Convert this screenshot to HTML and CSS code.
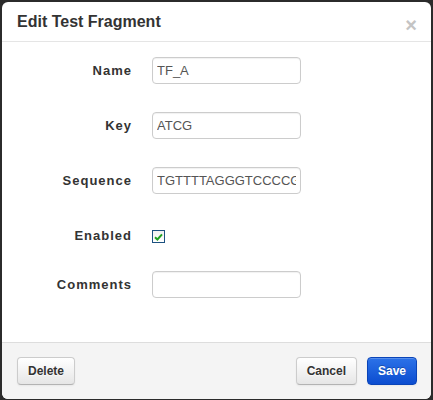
FILE: index.html
```html
<!DOCTYPE html>
<html>
<head>
<meta charset="utf-8">
<title>Edit Test Fragment</title>
<link rel="stylesheet" href="styles.css">
</head>
<body>
<div class="modal">
  <div class="modal-header">
    <h3 class="title">Edit Test Fragment</h3>
    <span class="close">×</span>
  </div>
  <div class="modal-body">
    <div class="row">
      <label class="label">Name</label>
      <input class="field" type="text" value="TF_A">
    </div>
    <div class="row">
      <label class="label">Key</label>
      <input class="field" type="text" value="ATCG">
    </div>
    <div class="row">
      <label class="label">Sequence</label>
      <input class="field" type="text" value="TGTTTTAGGGTCCCCGCCTAG">
    </div>
    <div class="row row-check">
      <label class="label">Enabled</label>
      <span class="checkbox"><svg width="9" height="8" viewBox="0 0 9 8"><path d="M1 4.2 L3.4 6.5 L8 1.3" fill="none" stroke="#1fa01f" stroke-width="2"/></svg></span>
    </div>
    <div class="row">
      <label class="label">Comments</label>
      <input class="field" type="text" value="">
    </div>
  </div>
  <div class="modal-footer">
    <button class="btn">Delete</button>
    <div class="spacer"></div>
    <button class="btn">Cancel</button>
    <button class="btn btn-primary">Save</button>
  </div>
</div>
</body>
</html>
```
FILE: styles.css
```css
html, body {
  margin: 0;
  padding: 0;
  background: #2b2b2b;
  height: 400px;
  overflow: hidden;
}
body {
  padding: 2px 2px 1px 2px;
  box-sizing: border-box;
  font-family: "Liberation Sans", Arial, sans-serif;
  color: #333;
}
.modal {
  width: 429px;
  height: 397px;
  background: #fff;
  border-radius: 6px;
  overflow: hidden;
  display: flex;
  flex-direction: column;
}
.modal-header {
  height: 39px;
  border-bottom: 1px solid #e5e5e5;
  display: flex;
  align-items: center;
  padding: 0 15px;
  box-sizing: content-box;
}
.title {
  margin: 0;
  font-size: 16px;
  font-weight: bold;
  color: #333;
  flex: 1;
}
.close {
  font-size: 20px;
  font-weight: bold;
  color: #c4c4c4;
  line-height: 20px;
  margin-right: -1px;
  margin-top: 6px;
}
.modal-body {
  flex: 1;
  padding-top: 15px;
}
.row {
  display: flex;
  align-items: center;
  height: 27px;
  margin-bottom: 28px;
}
.row-check {
  margin-bottom: 22px;
}
.label {
  width: 130px;
  text-align: right;
  font-size: 13px;
  font-weight: bold;
  letter-spacing: 1px;
  color: #333;
  margin-right: 20px;
}
.field {
  width: 149px;
  height: 27px;
  box-sizing: border-box;
  border: 1px solid #ccc;
  border-radius: 4px;
  padding: 0 4px;
  font-family: "Liberation Sans", Arial, sans-serif;
  font-size: 13px;
  color: #555;
  box-shadow: inset 0 1px 1px rgba(0,0,0,0.06);
  outline: none;
  margin: 0;
}
.checkbox {
  width: 13px;
  height: 13px;
  box-sizing: border-box;
  border: 1px solid #1c5180;
  background: linear-gradient(#f0f0f0, #fff);
  display: flex;
  align-items: center;
  justify-content: center;
  margin-top: 2px;
}
.modal-footer {
  flex: none;
  height: 57px;
  border-top: 1px solid #ddd;
  background: #f4f4f4;
  display: flex;
  align-items: flex-start;
  padding: 14px 14px 0 15px;
  box-sizing: border-box;
}
.spacer { flex: 1; }
.btn {
  height: 28px;
  padding: 0 10px;
  font-family: "Liberation Sans", Arial, sans-serif;
  font-size: 12px;
  font-weight: bold;
  color: #333;
  text-shadow: 0 1px 1px rgba(255,255,255,0.75);
  background: linear-gradient(#ffffff, #e6e6e6);
  border: 1px solid #ccc;
  border-bottom-color: #b3b3b3;
  border-radius: 4px;
  box-shadow: inset 0 1px 0 rgba(255,255,255,0.2), 0 1px 2px rgba(0,0,0,0.05);
  margin: 0;
}
.btn + .btn { margin-left: 10px; }
.btn:first-child { width: 58px; }
.btn-primary {
  color: #fff;
  text-shadow: 0 -1px 0 rgba(0,0,0,0.25);
  background: linear-gradient(#2c72e8, #0c4dd0);
  border-color: #0a44b8;
  width: 50px;
}
```
